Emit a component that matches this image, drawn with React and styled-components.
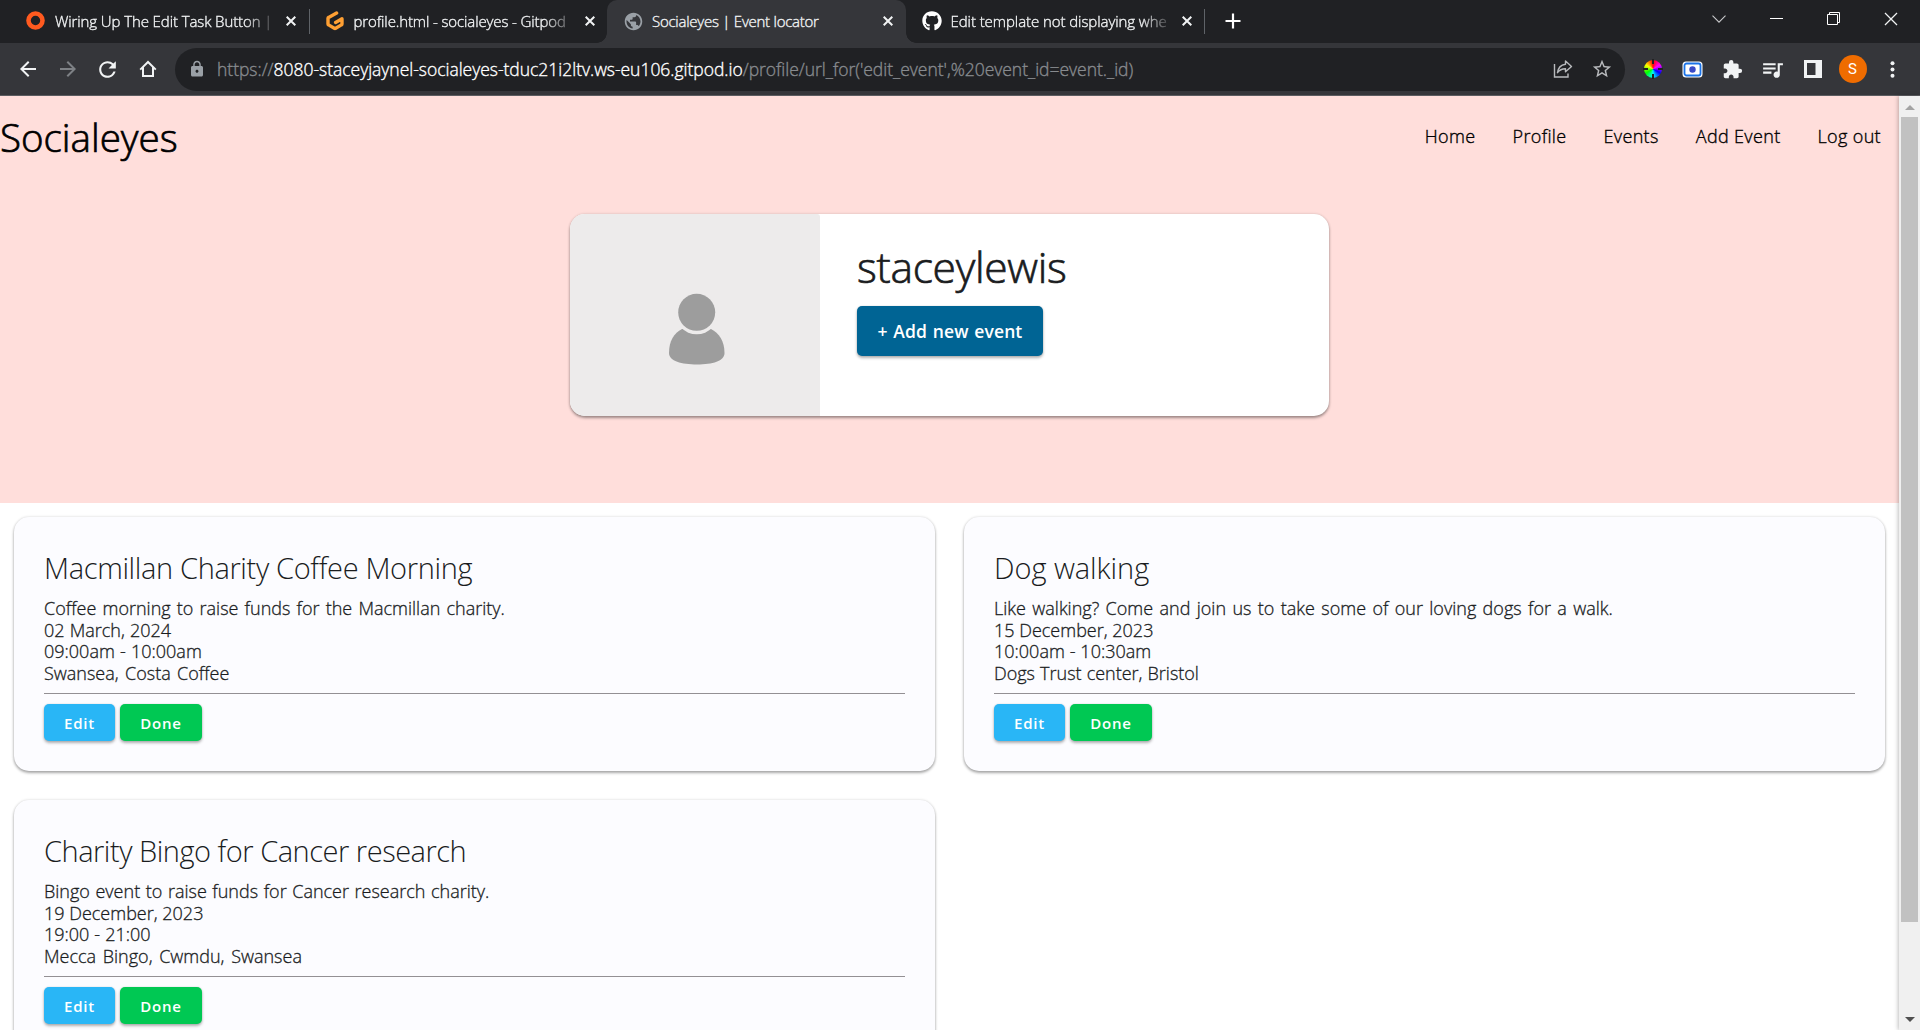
import React from 'react';
import styled, { createGlobalStyle } from 'styled-components';
import { MdArrowBack, MdArrowForward, MdRefresh, MdLock, MdStarBorder, MdExtension, MdQueueMusic, MdPublic } from 'react-icons/md';
import { FaGithub } from 'react-icons/fa';

const GlobalStyle = createGlobalStyle`
  * { box-sizing: border-box; }
  body { margin: 0; overflow: hidden; background: #fff; font-family: "Open Sans", "Noto Sans", sans-serif; }
  h1, h2, p { margin: 0; }
`;

const Screen = styled.div`
  width: 1920px;
  height: 1030px;
  display: flex;
  flex-direction: column;
  overflow: hidden;
`;

/* ---------- browser chrome ---------- */
const TabStrip = styled.div`
  height: 43px;
  flex: none;
  display: flex;
  padding-left: 10px;
  background: #202124;
  color: #f1f3f4;
`;
const Tab = styled.div`
  position: relative;
  width: 298.5px;
  height: 43px;
  flex: none;
  display: flex;
  align-items: center;
  padding: 0 8px 2px 16px;
  border-radius: 10px 10px 0 0;
  color: #f1f3f4;
  background: ${(p) => (p.$active ? '#35363a' : 'transparent')};
  &::before, &::after {
    content: ${(p) => (p.$active ? '""' : 'none')};
    position: absolute;
    bottom: 0;
    width: 10px;
    height: 10px;
  }
  &::before { left: -10px; background: radial-gradient(circle at 0 0, transparent 9.5px, #35363a 10px); }
  &::after { right: -10px; background: radial-gradient(circle at 100% 0, transparent 9.5px, #35363a 10px); }
`;
const Favicon = styled.span`
  width: 19px;
  height: 20px;
  flex: none;
  display: grid;
  place-items: center;
  margin-right: 10px;
`;
const TabTitle = styled.span`
  flex: none;
  width: 220px;
  margin-right: 11px;
  overflow: hidden;
  white-space: nowrap;
  font-size: 15px;
  font-weight: 300;
  line-height: 24px;
  -webkit-text-stroke: 0.35px currentColor;
  letter-spacing: ${(p) => p.$ls}px;
  mask-image: ${(p) => (p.$fade ? 'linear-gradient(90deg, #000 190px, rgba(0, 0, 0, 0.15) 218px)' : 'none')};
`;
const Divider = styled.span`
  width: 1px;
  height: 25px;
  margin: 9px -1px 0 0;
  flex: none;
  background: #5f6368;
`;
const NewTab = styled.div`
  width: 58px;
  display: grid;
  place-items: center;
  padding-bottom: 1px;
`;
const WindowButtons = styled.div`
  margin-left: auto;
  height: 37px;
  display: flex;
`;
const WindowButton = styled.span`
  width: 57.4px;
  display: grid;
  place-items: center;
`;
const Toolbar = styled.div`
  height: 53px;
  flex: none;
  display: flex;
  align-items: center;
  background: #35363a;
  border-bottom: 1px solid #5b5c60;
  color: #f1f3f4;
`;
const NavButton = styled.span`
  width: 40px;
  display: grid;
  place-items: center;
  color: ${(p) => (p.$dim ? '#7e8185' : '#f1f3f4')};
`;
const NavButtons = styled.div`
  width: 175px;
  display: flex;
  padding-left: 7.500px;
`;
const Omnibox = styled.div`
  width: 1450px;
  height: 43px;
  display: flex;
  align-items: center;
  padding: 0 4px 0 13px;
  border-radius: 22px;
  background: #202124;
  color: #b8babd;
`;
const Url = styled.span`
  margin: 0 auto 0 11px;
  color: #878a8e;
  white-space: nowrap;
  font-size: 17.5px;
  font-weight: 300;
  line-height: 24px;
  letter-spacing: -0.02px;
  -webkit-text-stroke: 0.35px currentColor;
`;
const Host = styled.span`
  color: #fff;
`;
const OmniIcon = styled.span`
  width: 39px;
  display: grid;
  place-items: center;
`;
const Extensions = styled.div`
  display: flex;
  padding-left: 7.500px;
`;
const Extension = styled.span`
  width: 40px;
  display: grid;
  place-items: center;
`;
const ColourWheel = styled.span`
  position: relative;
  width: 18px;
  height: 18px;
  border-radius: 50%;
  background: conic-gradient(#f00, #f0f, #00f, #0ff, #0f0, #ff0, #f00);
  &::before, &::after {
    content: "";
    position: absolute;
    left: 8px;
    top: -1px;
    width: 2px;
    height: 20px;
    background: linear-gradient(#222 5px, transparent 5px 15px, #222 15px);
  }
  &::after { transform: rotate(90deg); }
`;
const Avatar = styled.span`
  width: 28px;
  height: 28px;
  border-radius: 50%;
  display: grid;
  place-items: center;
  background: #ef6c00;
  color: #fff;
  font: 15px/28px Roboto, sans-serif;
`;

/* ---------- page ---------- */
const Viewport = styled.div`
  flex: 1;
  min-height: 0;
  display: flex;
`;
const Page = styled.main`
  width: 1899px;
  overflow: hidden;
  color: #1a1c1e;
`;
const Hero = styled.section`
  height: 407px;
  background: #ffdedb;
`;
const Header = styled.header`
  height: 82px;
  display: flex;
  align-items: center;
  justify-content: space-between;
  padding-right: 18px;
  color: #000;
`;
const Logo = styled.span`
  font-size: 38.5px;
  line-height: 48px;
  font-weight: 300;
  -webkit-text-stroke: 0.7px currentColor;
`;
const Menu = styled.nav`
  display: flex;
  gap: 37px;
  padding-bottom: 2px;
`;
const MenuLink = styled.a`
  font-size: 18px;
  line-height: 24px;
  font-weight: 300;
  letter-spacing: 0.35px;
  -webkit-text-stroke: 0.35px currentColor;
`;
const ProfileCard = styled.div`
  width: 759px;
  height: 202px;
  margin: 36px auto 0;
  display: flex;
  overflow: hidden;
  border-radius: 15px;
  background: #fff;
  box-shadow: 0 2px 3px rgba(0, 0, 0, 0.36), 0 0 3px rgba(0, 0, 0, 0.14);
`;
const Portrait = styled.svg`
  width: 250px;
  height: 202px;
  flex: none;
  background: #edebeb;
  border-top-right-radius: 3px;
`;
const ProfileBody = styled.div`
  padding: 25px 0 0 37px;
`;
const UserName = styled.h1`
  margin-bottom: 11px;
  font-size: 42.5px;
  line-height: 56px;
  font-weight: 300;
  letter-spacing: -0.28px;
  -webkit-text-stroke: 0.7px currentColor;
`;
const Button = styled.button`
  display: inline-flex;
  align-items: center;
  justify-content: center;
  width: ${(p) => p.$w}px;
  height: ${(p) => (p.$large ? 50 : 37)}px;
  padding: 0;
  border: 0;
  border-radius: 5px;
  background: ${(p) => p.$bg};
  color: #fff;
  font-family: inherit;
  font-size: ${(p) => (p.$large ? 17.500 : 15)}px;
  font-weight: 600;
  letter-spacing: ${(p) => (p.$large ? 0.12 : 0.8)}px;
  word-spacing: 1px;
  box-shadow: 0 2px 3px rgba(0, 0, 0, 0.3), 0 0 2px rgba(0, 0, 0, 0.12);
`;
const Grid = styled.section`
  display: grid;
  grid-template-columns: 921px 921px;
  gap: 29px;
  padding: 14px;
`;
const Card = styled.article`
  height: 254px;
  padding: 31px 30px 30px;
  border-radius: 15px;
  background: #fcfcff;
  box-shadow: 0 2px 3px rgba(0, 0, 0, 0.32), 0 0 3px rgba(0, 0, 0, 0.14);
`;
const CardTitle = styled.h2`
  font-size: 29px;
  line-height: 40px;
  font-weight: 300;
  letter-spacing: ${(p) => p.$ls}px;
  white-space: nowrap;
`;
const Details = styled.div`
  margin-top: 10px;
  font-size: 18px;
  line-height: 21.6px;
  font-weight: 300;
  -webkit-text-stroke: 0.3px currentColor;
`;
const Line = styled.p`
  white-space: nowrap;
  word-spacing: ${(p) => p.$ws}px;
`;
const Rule = styled.hr`
  height: 1px;
  margin: 9px 0 10px;
  border: 0;
  background: #939094;
`;
const Actions = styled.div`
  display: flex;
  gap: 5px;
`;
const Scrollbar = styled.div`
  position: relative;
  width: 21px;
  display: flex;
  flex-direction: column;
  align-items: center;
  justify-content: space-between;
  padding: 9px 0 8px;
  background: #f0f0f0;
  box-shadow: -1px 0 4px rgba(0, 0, 0, 0.25);
`;
const Thumb = styled.span`
  width: 17px;
  height: 805px;
  margin: 7px 0 auto;
  background: #c1c1c1;
`;
const Arrow = styled.span`
  border: 5px solid transparent;
  border-top: ${(p) => (p.$up ? '0' : '5px solid #505050')};
  border-bottom: ${(p) => (p.$up ? '5px solid #a3a3a3' : '0')};
`;

const Cross = ({ size = 10, stroke = 2 }) => (
  <svg width={size} height={size} viewBox="0 0 10 10" fill="none" stroke="currentColor" strokeWidth={stroke}>
    <path d="M.7.7l8.600 8.600M9.300.7l-8.600 8.600" />
  </svg>
);
const RingIcon = () => (
  <svg width="19" height="19" viewBox="0 0 19 19"><circle cx="9.5" cy="9.5" r="7" fill="none" stroke="#ff5a1f" strokeWidth="4.6" /></svg>
);
const GitpodIcon = () => (
  <svg width="20" height="20" viewBox="0 0 20 20" fill="none" stroke="#ffa033" strokeWidth="3.4" strokeLinecap="round" strokeLinejoin="round">
    <path d="M11.6 2.1L3.6 6.4a1 1 0 0 0-.6.9v5.6c0 .5.2.8.6 1l5.7 3.3c.5.3.9.3 1.4 0l5.700-3.300c.4-.2.6-.5.6-1V7.800l-6.400 3.600" />
  </svg>
);

const tabs = [
  { title: 'Wiring Up The Edit Task Button |', icon: <RingIcon />, fade: true, ls: -0.1 },
  { title: 'profile.html - socialeyes - Gitpod', icon: <GitpodIcon />, fade: true, ls: -0.12 },
  { title: 'Socialeyes | Event locator', icon: <MdPublic size={21} color="#9aa0a6" />, active: true, ls: -0.25 },
  { title: 'Edit template not displaying whe', icon: <FaGithub size={20} color="#fff" />, fade: true, ls: -0.07 },
];

const events = [
  {
    title: 'Macmillan Charity Coffee Morning',
    ls: -0.35,
    lines: [
      ['Coffee morning to raise funds for the Macmillan charity.', 1.5],
      ['02 March, 2024', 0.5],
      ['09:00am - 10:00am', 0.5],
      ['Swansea, Costa Coffee', 1.7],
    ],
  },
  {
    title: 'Dog walking',
    ls: -0.05,
    lines: [
      ['Like walking? Come and join us to take some of our loving dogs for a walk.', 1.7],
      ['15 December, 2023', 0],
      ['10:00am - 10:30am', 0.2],
      ['Dogs Trust center, Bristol', 0.4],
    ],
  },
  {
    title: 'Charity Bingo for Cancer research',
    ls: -0.48,
    lines: [
      ['Bingo event to raise funds for Cancer research charity.', 0.9],
      ['19 December, 2023', 0],
      ['19:00 - 21:00', 0.3],
      ['Mecca Bingo, Cwmdu, Swansea', 2],
    ],
  },
];

export default function App() {
  return (
    <Screen>
      <GlobalStyle />
      <TabStrip>
        {tabs.map((t, i) => (
          <React.Fragment key={t.title}>
            {i === 1 && <Divider />}
            <Tab $active={t.active}>
              <Favicon>{t.icon}</Favicon>
              <TabTitle $fade={t.fade} $ls={t.ls}>{t.title}</TabTitle>
              <Cross />
            </Tab>
          </React.Fragment>
        ))}
        <Divider />
        <NewTab>
          <svg width="16" height="16" viewBox="0 0 16 16" stroke="#fff" strokeWidth="2.2"><path d="M8 .5v15M.5 8h15" /></svg>
        </NewTab>
        <WindowButtons>
          <WindowButton><svg width="14" height="8" viewBox="0 0 14 8" fill="none" stroke="#c8c9cb" strokeWidth="1.1"><path d="M.5.7L7 7.200 13.500.7" /></svg></WindowButton>
          <WindowButton><svg width="13" height="1" viewBox="0 0 13 1"><path d="M0 0h13v1H0z" fill="#fff" /></svg></WindowButton>
          <WindowButton><svg width="13" height="13" viewBox="0 0 13 13" fill="none" stroke="#fff"><path d="M.5 2.500h10v10H.5zM2.500 2.500V.5h10v10h-2" /></svg></WindowButton>
          <WindowButton><Cross size={14} stroke={0.9} /></WindowButton>
        </WindowButtons>
      </TabStrip>
      <Toolbar>
        <NavButtons>
          <NavButton><MdArrowBack size={24} /></NavButton>
          <NavButton $dim><MdArrowForward size={24} /></NavButton>
          <NavButton><MdRefresh size={25} /></NavButton>
          <NavButton>
            <svg width="18" height="18" viewBox="0 0 18 18" fill="none" stroke="currentColor" strokeWidth="2"><path d="M1.200 9.600L9 2l7.800 7.600M4 7.500V16h10V7.500" /></svg>
          </NavButton>
        </NavButtons>
        <Omnibox>
          <MdLock size={18} color="#9aa0a6" />
          <Url>
            https://<Host>8080-staceyjaynel-socialeyes-tduc21i2ltv.ws-eu106.gitpod.io</Host>/profile/url_for('edit_event',%20event_id=event._id)
          </Url>
          <OmniIcon>
            <svg width="20" height="20" viewBox="0 0 20 20" fill="none" stroke="currentColor" strokeWidth="1.4">
              <path d="M1.500 5v13h13.500v-3.500" />
              <path d="M12.500 2l6 5.500-6 5.300V9.700c-3.500 0-6 1-8 4 .5-4.500 3.200-7.800 8-8.500z" strokeLinejoin="round" />
            </svg>
          </OmniIcon>
          <OmniIcon><MdStarBorder size={22} /></OmniIcon>
        </Omnibox>
        <Extensions>
          <Extension>
            <ColourWheel />
          </Extension>
          <Extension>
            <svg width="21" height="17" viewBox="0 0 21 17"><rect x=".5" y=".5" width="20" height="16" rx="3.500" fill="#fff" /><rect x="2.500" y="2.500" width="16" height="12" rx="2" fill="#fff" stroke="#1a73e8" strokeWidth="1.800" /><circle cx="10.500" cy="8.500" r="3.200" fill="#3949c6" /></svg>
          </Extension>
          <Extension><MdExtension size={21} /></Extension>
          <Extension><MdQueueMusic size={25} /></Extension>
          <Extension>
            <svg width="18" height="18" viewBox="0 0 18 18"><path fillRule="evenodd" d="M0 0h18v18H0zM3 3v12h8.500V3z" fill="#f1f3f4" /></svg>
          </Extension>
          <Extension><Avatar>S</Avatar></Extension>
          <Extension>
            <svg width="5" height="17" viewBox="0 0 5 17" fill="#f1f3f4"><circle cx="2.500" cy="2.200" r="2" /><circle cx="2.500" cy="8.500" r="2" /><circle cx="2.500" cy="14.800" r="2" /></svg>
          </Extension>
        </Extensions>
      </Toolbar>

      <Viewport>
        <Page>
          <Hero>
            <Header>
              <Logo>Socialeyes</Logo>
              <Menu>
                {['Home', 'Profile', 'Events', 'Add Event', 'Log out'].map((m) => <MenuLink key={m}>{m}</MenuLink>)}
              </Menu>
            </Header>
            <ProfileCard>
              <Portrait viewBox="0 0 250 202">
                <path d="M99 139c0-12 5-20 13-24h29c8 4 13.500 12 13.500 24 0 8-12 11.500-27.500 11.500S99 147 99 139z" fill="#9d9d9d" />
                <circle cx="126.700" cy="98.300" r="22" fill="#edebeb" />
                <circle cx="126.700" cy="98.300" r="18.500" fill="#9d9d9d" />
              </Portrait>
              <ProfileBody>
                <UserName>staceylewis</UserName>
                <Button $bg="#006494" $w={186} $large>+ Add new event</Button>
              </ProfileBody>
            </ProfileCard>
          </Hero>
          <Grid>
            {events.map((e) => (
              <Card key={e.title}>
                <CardTitle $ls={e.ls}>{e.title}</CardTitle>
                <Details>{e.lines.map(([text, ws]) => <Line key={text} $ws={ws}>{text}</Line>)}</Details>
                <Rule />
                <Actions>
                  <Button $bg="#29b6f6" $w={71}>Edit</Button>
                  <Button $bg="#00c853" $w={82}>Done</Button>
                </Actions>
              </Card>
            ))}
          </Grid>
        </Page>
        <Scrollbar>
          <Arrow $up />
          <Thumb />
          <Arrow />
        </Scrollbar>
      </Viewport>
    </Screen>
  );
}
